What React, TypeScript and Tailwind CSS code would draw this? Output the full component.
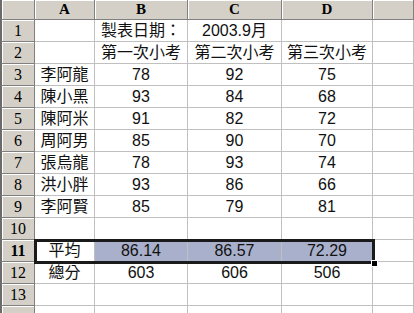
import React from 'react';

const cols = ['A', 'B', 'C', 'D', ''];

const rows: string[][] = [
  ['', '製表日期：', '2003.9月', '', ''],
  ['', '第一次小考', '第二次小考', '第三次小考', ''],
  ['李阿龍', '78', '92', '75', ''],
  ['陳小黑', '93', '84', '68', ''],
  ['陳阿米', '91', '82', '72', ''],
  ['周阿男', '85', '90', '70', ''],
  ['張烏龍', '78', '93', '74', ''],
  ['洪小胖', '93', '86', '66', ''],
  ['李阿賢', '85', '79', '81', ''],
  ['', '', '', '', ''],
  ['平均', '86.14', '86.57', '72.29', ''],
  ['總分', '603', '606', '506', ''],
  ['', '', '', '', ''],
  ['', '', '', '', ''],
];

const App: React.FC = () => {
  return (
    <div className="relative w-[414px] h-[313px] overflow-hidden bg-white">
      <div className="grid grid-cols-[35px_60px_93px_94px_91px_1fr] grid-rows-[20px_repeat(14,22px)]">
        {/* Corner */}
        <div className="bg-[#d4d0c8] border-l-2 border-l-[#6b6b6b] border-r border-b border-[#808080] shadow-[inset_1px_1px_0_#fff]" />
        {cols.map((c, i) => (
          <div
            key={c + i}
            className="bg-[#d4d0c8] border-r border-b border-[#808080] shadow-[inset_1px_1px_0_#fff] flex items-center justify-center font-bold text-[15px] leading-none text-black"
            style={{ fontFamily: '"Liberation Serif", "Times New Roman", serif' }}
          >
            {c}
          </div>
        ))}
        {rows.map((row, r) => (
          <React.Fragment key={r}>
            <div
              className={`bg-[#d4d0c8] border-l-2 border-l-[#6b6b6b] border-r border-b border-[#808080] shadow-[inset_1px_1px_0_#fff] flex items-center justify-center text-[16px] leading-none text-black ${r === 10 ? 'font-bold' : ''}`}
              style={{ fontFamily: '"Liberation Serif", "Times New Roman", serif' }}
            >
              {r < 13 ? r + 1 : ''}
            </div>
            {row.map((v, c) => (
              <div
                key={c}
                className={`border-r border-b border-[#c0c0c0] flex items-center justify-center whitespace-nowrap overflow-visible text-[16px] leading-none text-[#111] ${r === 10 && c >= 1 && c <= 3 ? 'bg-[#a9b0cb]' : ''}`}
                style={{ fontFamily: '"Liberation Sans", "Noto Sans CJK TC", sans-serif' }}
              >
                {v}
              </div>
            ))}
          </React.Fragment>
        ))}
      </div>
      {/* Selection outline */}
      <div className="absolute left-[34px] top-[239px] w-[341px] h-[25px] border-[3px] border-[#1a1a1a] pointer-events-none" />
      {/* Fill handle */}
      <div className="absolute left-[371px] top-[260px] w-[7px] h-[7px] bg-black border border-white pointer-events-none" />
    </div>
  );
};

export default App;
